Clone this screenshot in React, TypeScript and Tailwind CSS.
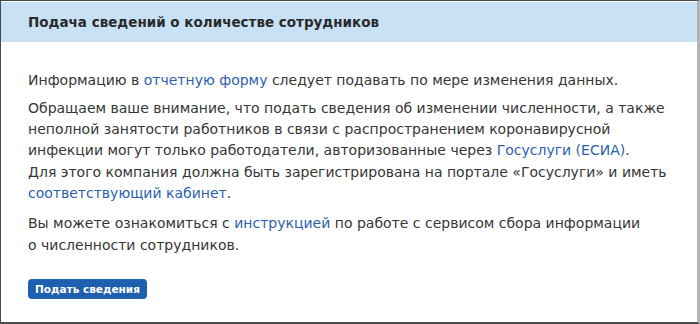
import React from "react";

const Link: React.FC<{ children: React.ReactNode }> = ({ children }) => (
  <a href="#" className="text-[#2b5fae]">
    {children}
  </a>
);

export default function App() {
  return (
    <div className="w-[700px] h-[324px] bg-white border-t border-l border-b-2 border-[#4a4a4a] border-r-[3px] border-r-[#b3b3b3] flex flex-col font-['DejaVu_Sans',sans-serif] text-[#363636]">
      <div className="mt-px h-[40px] bg-[#c8e1f5] flex items-center pl-[27px]">
        <h1 className="text-[13.5px] font-semibold text-[#2a2a2a]">
          Подача сведений о количестве сотрудников
        </h1>
      </div>
      <div className="pl-[27px] pr-4 pt-[28px] text-[14px] leading-[21.3px]">
        <p>
          Информацию в <Link>отчетную форму</Link> следует подавать по мере изменения данных.
        </p>
        <p className="mt-[6.5px]">
          Обращаем ваше внимание, что подать сведения об изменении численности, а также
          <br />
          неполной занятости работников в связи с распространением коронавирусной
          <br />
          инфекции могут только работодатели, авторизованные через <Link>Госуслуги (ЕСИА)</Link>.
          <br />
          Для этого компания должна быть зарегистрирована на портале «Госуслуги» и иметь
          <br />
          <Link>соответствующий кабинет</Link>.
        </p>
        <p className="mt-[9px]">
          Вы можете ознакомиться с <Link>инструкцией</Link> по работе с сервисом сбора информации
          <br />
          о численности сотрудников.
        </p>
        <button className="mt-[23px] h-[20px] px-[7px] rounded-[4px] bg-[#1f5fb0] text-white text-[10.5px] font-semibold leading-none">
          Подать сведения
        </button>
      </div>
    </div>
  );
}
